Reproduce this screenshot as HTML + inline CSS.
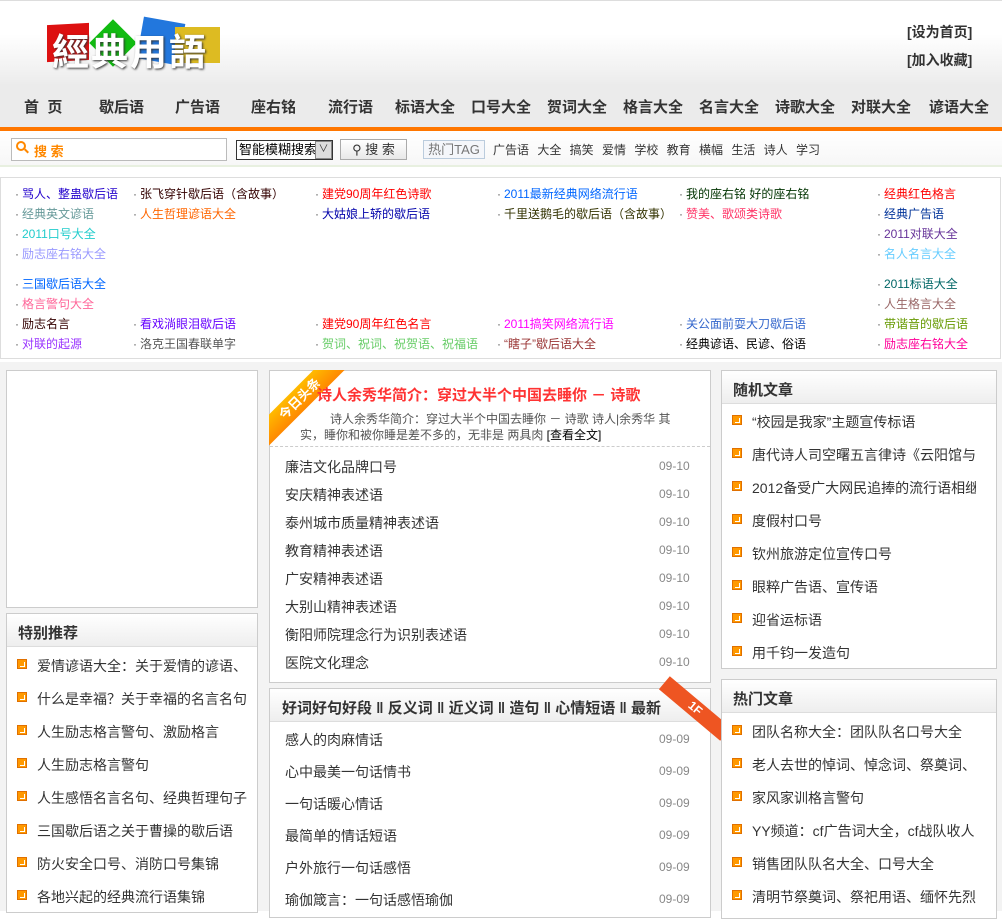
<!DOCTYPE html>
<html><head><meta charset="utf-8">
<style>
*{margin:0;padding:0;box-sizing:border-box}
body{width:1002px;height:911px;overflow:hidden;position:relative;background:#fff;font-family:"Liberation Sans","Noto Sans CJK SC",sans-serif;font-size:12px;color:#333}
.a{position:absolute;white-space:nowrap}
.hdr{left:0;top:0;width:1002px;height:84px;background:linear-gradient(#fff 0%,#fff 40%,#ececec 100%);border-top:1px solid #ddd}
.nav{left:0;top:84px;width:1002px;height:43px;background:#ebebeb}
.nav span{position:absolute;top:12px;font-size:15px;font-weight:bold;color:#333}
.ol{left:0;top:127px;width:1002px;height:4px;background:#ff7700}
.sr{left:0;top:131px;width:1002px;height:36px;background:linear-gradient(#fff,#f7f7f7);border-bottom:2px solid #e8f0e0}
.lk{left:0;top:177px;width:1001px;height:182px;border:1px solid #ddd}
.lk span{position:absolute;font-size:12px;white-space:nowrap}
.lk span:before{content:"·";color:#555;margin-right:3px}
.box{position:absolute;border:1px solid #ccc;background:#fff}
.bh{position:absolute;left:0;top:0;right:0;height:33px;background:linear-gradient(#fff,#eee);border-bottom:1px solid #ddd;font-size:15px;font-weight:bold;color:#333;padding:8px 0 0 11px;white-space:nowrap;overflow:hidden}
.li{position:absolute;font-size:14px;color:#333;white-space:nowrap;overflow:hidden}
.ic{position:absolute;width:10px;height:10px;background:#f90;border:1px solid #e07000}
.ic:after{content:"";position:absolute;left:2px;top:2px;width:4px;height:4px;border-right:1.5px solid #fff;border-bottom:1.5px solid #fff}
.dt{position:absolute;font-size:12px;color:#888}
</style></head><body>
<div class="a hdr"></div>
<div class="a" style="left:47px;top:24px;width:42px;height:37px;background:#d11;transform:skewY(-3deg)"></div>
<div class="a" style="left:92px;top:22px;width:42px;height:42px;background:#1b1;transform:rotate(45deg) scale(.8)"></div>
<div class="a" style="left:140px;top:20px;width:42px;height:42px;background:#27d;transform:rotate(10deg)"></div>
<div class="a" style="left:175px;top:27px;width:45px;height:36px;background:#db2"></div>
<div class="a" style="left:52px;top:22px;font-size:37px;font-weight:bold;color:#fff;letter-spacing:2px;text-shadow:1px 1px 2px #333;font-family:'Noto Sans CJK TC',sans-serif">經典用語</div>
<div class="a" style="left:907px;top:22px;font-size:14px;font-weight:bold;color:#333">[设为首页]</div>
<div class="a" style="left:907px;top:50px;font-size:14px;font-weight:bold;color:#333">[加入收藏]</div>
<div class="a nav">
<span style="left:24px">首&nbsp;&nbsp;页</span><span style="left:99px">歇后语</span><span style="left:175px">广告语</span><span style="left:251px">座右铭</span><span style="left:328px">流行语</span><span style="left:395px">标语大全</span><span style="left:471px">口号大全</span><span style="left:547px">贺词大全</span><span style="left:623px">格言大全</span><span style="left:699px">名言大全</span><span style="left:775px">诗歌大全</span><span style="left:851px">对联大全</span><span style="left:929px">谚语大全</span>
</div>
<div class="a ol"></div>
<div class="a sr"></div>
<div class="a" style="left:11px;top:138px;width:216px;height:23px;border:1px solid #bbb;background:#fff"></div>
<div class="a" style="left:16px;top:141px;width:10px;height:10px;border:2px solid #f80;border-radius:50%"></div>
<div class="a" style="left:24px;top:150px;width:5px;height:2px;background:#f80;transform:rotate(45deg)"></div>
<div class="a" style="left:34px;top:141px;font-size:13px;font-weight:bold;color:#f80">搜 索</div>
<div class="a" style="left:236px;top:140px;width:97px;height:20px;border:1px solid #333;background:#fff;font-size:13px;padding-left:2px;line-height:18px;color:#000">智能模糊搜索</div>
<div class="a" style="left:315px;top:141px;width:17px;height:18px;background:#ddd;border:1px solid #888;font-size:10px;text-align:center;line-height:16px">∨</div>
<div class="a" style="left:340px;top:139px;width:67px;height:21px;border:1px solid #aaa;background:linear-gradient(#fff,#e8e8e8);font-size:13px;text-align:center;line-height:19px;color:#333">⚲ 搜 索</div>
<div class="a" style="left:423px;top:140px;width:62px;height:19px;border:1px solid #bcd;background:#f4f6fa;font-size:13px;color:#777;text-align:center;line-height:17px">热门TAG</div>
<div class="a" style="left:493px;top:141px;font-size:12px;color:#333;word-spacing:5px">广告语 大全 搞笑 爱情 学校 教育 横幅 生活 诗人 学习</div>
<div class="a lk">
<span style="left:14px;top:7px;color:#2200cc">骂人、整蛊歇后语</span>
<span style="left:132px;top:7px;color:#330000">张飞穿针歇后语（含故事）</span>
<span style="left:314px;top:7px;color:#f00">建党90周年红色诗歌</span>
<span style="left:496px;top:7px;color:#0066ff">2011最新经典网络流行语</span>
<span style="left:678px;top:7px;color:#003300">我的座右铭 好的座右铭</span>
<span style="left:876px;top:7px;color:#f00">经典红色格言</span>
<span style="left:14px;top:27px;color:#669999">经典英文谚语</span>
<span style="left:132px;top:27px;color:#ff6600">人生哲理谚语大全</span>
<span style="left:314px;top:27px;color:#0000aa">大姑娘上轿的歇后语</span>
<span style="left:496px;top:27px;color:#333300">千里送鹅毛的歇后语（含故事）</span>
<span style="left:678px;top:27px;color:#ff3366">赞美、歌颂类诗歌</span>
<span style="left:876px;top:27px;color:#003399">经典广告语</span>
<span style="left:14px;top:47px;color:#22cccc">2011口号大全</span>
<span style="left:876px;top:47px;color:#663399">2011对联大全</span>
<span style="left:14px;top:67px;color:#9999ff">励志座右铭大全</span>
<span style="left:876px;top:67px;color:#66ccff">名人名言大全</span>
<span style="left:14px;top:97px;color:#0066ff">三国歇后语大全</span>
<span style="left:876px;top:97px;color:#006666">2011标语大全</span>
<span style="left:14px;top:117px;color:#ff6699">格言警句大全</span>
<span style="left:876px;top:117px;color:#996666">人生格言大全</span>
<span style="left:14px;top:137px;color:#330000">励志名言</span>
<span style="left:132px;top:137px;color:#6600ff">看戏淌眼泪歇后语</span>
<span style="left:314px;top:137px;color:#f00">建党90周年红色名言</span>
<span style="left:496px;top:137px;color:#ff00ff">2011搞笑网络流行语</span>
<span style="left:678px;top:137px;color:#3366cc">关公面前耍大刀歇后语</span>
<span style="left:876px;top:137px;color:#669900">带谐音的歇后语</span>
<span style="left:14px;top:157px;color:#9933ff">对联的起源</span>
<span style="left:132px;top:157px;color:#555">洛克王国春联单字</span>
<span style="left:314px;top:157px;color:#66cc66">贺词、祝词、祝贺语、祝福语</span>
<span style="left:496px;top:157px;color:#993333">“瞎子”歇后语大全</span>
<span style="left:678px;top:157px;color:#000">经典谚语、民谚、俗语</span>
<span style="left:876px;top:157px;color:#ff0099">励志座右铭大全</span>
</div>
<div class="a" style="left:0;top:362px;width:1002px;height:549px;background:#f3f3f3"></div>
<!-- left -->
<div class="box" style="left:6px;top:370px;width:252px;height:238px"></div>
<div class="box" style="left:6px;top:613px;width:252px;height:300px"><div class="bh">特别推荐</div></div>
<!-- middle -->
<div class="box" style="left:269px;top:370px;width:442px;height:313px"></div>
<div class="a" style="left:269px;top:370px;width:80px;height:76px;overflow:hidden">
<div style="position:absolute;left:-24px;top:18px;width:110px;height:22px;background:linear-gradient(#fb0,#f80);transform:rotate(-45deg);color:#fff;font-size:13px;font-weight:bold;text-align:center;line-height:22px">今日头条</div>
</div>
<div class="a" style="left:317px;top:384px;font-size:15px;font-weight:bold;color:#f33">诗人余秀华简介：穿过大半个中国去睡你 － 诗歌</div>
<div class="a" style="left:300px;top:411px;width:390px;font-size:12px;color:#555;white-space:normal;line-height:16px;text-indent:30px">诗人余秀华简介：穿过大半个中国去睡你 － 诗歌 诗人|余秀华 其实，睡你和被你睡是差不多的，无非是 两具肉 <span style="color:#000">[查看全文]</span></div>
<div class="a" style="left:270px;top:446px;width:440px;border-top:1px dashed #ccc"></div>
<div class="box" style="left:269px;top:688px;width:442px;height:230px"><div class="bh" style="font-size:15px;padding-left:12px">好词好句好段 ‖ 反义词 ‖ 近义词 ‖ 造句 ‖ 心情短语 ‖ 最新</div></div>
<div class="a" style="left:655px;top:700px;width:80px;height:17px;background:#e52;transform:rotate(40deg);color:#fff;font-size:12px;font-weight:bold;text-align:center;line-height:17px">1F</div>
<!-- right -->
<div class="box" style="left:721px;top:370px;width:276px;height:299px"><div class="bh">随机文章</div></div>
<div class="box" style="left:721px;top:679px;width:276px;height:240px"><div class="bh">热门文章</div></div>
<div id="items"></div>
<script>
function L(x,y,w,arr,dy,icon){var h='';arr.forEach(function(t,i){var yy=y+i*dy;if(icon)h+='<div class="ic" style="left:'+(x-20)+'px;top:'+(yy+3)+'px"></div>';h+='<div class="li" style="left:'+x+'px;top:'+yy+'px;width:'+w+'px">'+t+'</div>';});return h;}
function D(y,arr,dy,d){var h='';arr.forEach(function(t,i){var yy=y+i*dy;h+='<div class="li" style="left:285px;top:'+yy+'px">'+t+'</div><div class="dt" style="left:659px;top:'+(yy+2)+'px">'+d+'</div>';});return h;}
var h='';
h+=L(37,656,215,['爱情谚语大全：关于爱情的谚语、','什么是幸福？关于幸福的名言名句','人生励志格言警句、激励格言','人生励志格言警句','人生感悟名言名句、经典哲理句子','三国歇后语之关于曹操的歇后语','防火安全口号、消防口号集锦','各地兴起的经典流行语集锦'],33,1);
h+=D(457,['廉洁文化品牌口号','安庆精神表述语','泰州城市质量精神表述语','教育精神表述语','广安精神表述语','大别山精神表述语','衡阳师院理念行为识别表述语','医院文化理念'],28,'09-10');
h+=D(730,['感人的肉麻情话','心中最美一句话情书','一句话暖心情话','最简单的情话短语','户外旅行一句话感悟','瑜伽箴言：一句话感悟瑜伽'],32,'09-09');
h+=L(752,412,224,['“校园是我家”主题宣传标语','唐代诗人司空曙五言律诗《云阳馆与','2012备受广大网民追捧的流行语相继','度假村口号','钦州旅游定位宣传口号','眼粹广告语、宣传语','迎省运标语','用千钧一发造句'],33,1);
h+=L(752,722,224,['团队名称大全：团队队名口号大全','老人去世的悼词、悼念词、祭奠词、','家风家训格言警句','YY频道：cf广告词大全，cf战队收人','销售团队队名大全、口号大全','清明节祭奠词、祭祀用语、缅怀先烈'],33,1);
document.getElementById('items').innerHTML=h;
</script>
</body></html>
